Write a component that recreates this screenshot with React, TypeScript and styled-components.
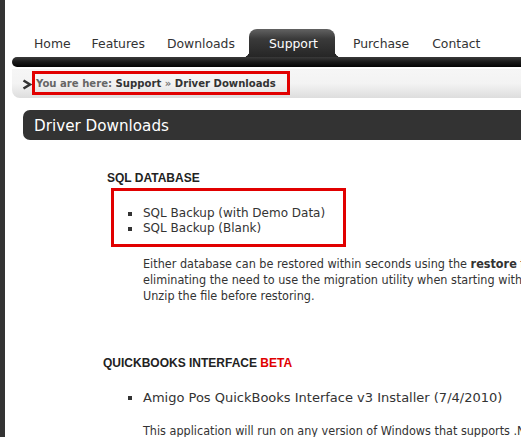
import React from 'react'
import styled, {createGlobalStyle} from 'styled-components'

const GlobalStyle = createGlobalStyle`
    html, body {
        margin: 0;
        padding: 0;
        background: #fff;
        overflow: hidden;
    }
    body {
        font-family: "DejaVu Sans", Verdana, sans-serif;
        color: #333;
    }
`

const Page = styled.div`
    display: flex;
    width: 521px;
    height: 437px;
    overflow: hidden;
`

const SideStrip = styled.div`
    width: 5px;
    flex-shrink: 0;
    background: #333;
`

const Main = styled.div`
    flex: 1;
    min-width: 0;
    padding: 29px 0 0 7px;
    white-space: nowrap;
`

const Nav = styled.ul`
    display: flex;
    height: 28px;
    margin: 0;
    padding: 0 0 0 11px;
    list-style: none;
`

const NavItem = styled.li<{ $active?: boolean }>`
    position: relative;
    display: flex;
    align-items: flex-end;
    padding: ${p => (p.$active ? '0 17px 6px 20px' : '0 11px 6px')};
    margin: ${p => (p.$active ? '0 7px 0 3px' : '0')};
    font-size: 12.4px;
    line-height: 15px;
    color: ${p => (p.$active ? '#fff' : '#333')};
    background: ${p => (p.$active ? 'linear-gradient(#626262, #3a3a3a 35%, #262626)' : 'none')};
    border-radius: ${p => (p.$active ? '8px 8px 0 0' : '0')};

    &:first-child {
        padding-right: 10px;
    }
    &:last-child {
        padding-left: 12px;
    }

    &::before,
    &::after {
        content: '';
        display: ${p => (p.$active ? 'block' : 'none')};
        position: absolute;
        bottom: 0;
        width: 6px;
        height: 6px;
    }
    &::before {
        left: -6px;
        background: radial-gradient(circle at 0 0, transparent 6px, #262626 6.5px);
    }
    &::after {
        right: -6px;
        background: radial-gradient(circle at 100% 0, transparent 6px, #262626 6.5px);
    }
`

const NavBar = styled.div`
    height: 10px;
    border-radius: 5px 0 0 5px;
    background: linear-gradient(#3a3a3a, #1a1a1a 50%, #050505);
`

const Breadcrumb = styled.div`
    display: flex;
    align-items: flex-start;
    height: 29px;
    margin-top: 2px;
    padding: 2px 0 0 10px;
    box-sizing: border-box;
    border-radius: 0 0 0 8px;
    background: linear-gradient(#f6f6f6, #f3f3f3 50%, #dddddd);
    font-size: 10.1px;
    font-weight: bold;
`

const Chevron = styled.svg`
    margin-top: 8px;
    flex-shrink: 0;
`

const Trail = styled.div`
    border: 3px solid #e10000;
    padding: 1px 11px 0 1px;
    line-height: 17px;
    color: #333;
`

const TrailLabel = styled.span`
    color: #666;
`

const TrailSep = styled.span`
    color: #777;
`

const PageTitle = styled.h1`
    height: 30px;
    margin: 12px 0 0 11px;
    padding: 2px 0 0 11px;
    box-sizing: border-box;
    border-radius: 7px 0 0 7px;
    background: #333;
    color: #fff;
    font-size: 15.2px;
    font-weight: normal;
    line-height: 28px;
`

const Content = styled.div`
    padding-left: 91px;
`

const SectionTitle = styled.h2<{ $indent?: number; $gap: number }>`
    margin: ${p => p.$gap}px 0 0 ${p => p.$indent ?? 0}px;
    font-family: "Liberation Sans", Arial, sans-serif;
    font-size: 12px;
    font-weight: bold;
    line-height: 16px;
    color: #222;
`

const Beta = styled.span`
    color: #e00000;
`

const Highlight = styled.div`
    width: 235px;
    box-sizing: border-box;
    margin: 2.5px 0 0 8px;
    padding: 14.5px 0 8.5px 14px;
    border: 3px solid #e10000;
`

const FileList = styled.ul<{ $indent?: number; $gap?: number }>`
    margin: ${p => p.$gap ?? 0}px 0 0 ${p => p.$indent ?? 0}px;
    padding: 0;
    list-style: none;
`

const FileItem = styled.li<{ $size?: number }>`
    display: flex;
    align-items: center;
    font-size: ${p => p.$size ?? 12}px;
    line-height: 15px;
    color: #333;

    &::before {
        content: '';
        width: 4px;
        height: 4px;
        margin: 1px 11px 0 0;
        background: #333;
        flex-shrink: 0;
    }
`

const Note = styled.p<{ $gap: number }>`
    margin: ${p => p.$gap}px 0 0 40px;
    font-family: "DejaVu Sans Condensed", "DejaVu Sans", sans-serif;
    font-stretch: condensed;
    font-size: 12.5px;
    line-height: 16px;
    color: #333;
`

export default function App() {
    const navItems = ['Home', 'Features', 'Downloads', 'Support', 'Purchase', 'Contact']

    return (
        <>
            <GlobalStyle/>
            <Page>
                <SideStrip/>
                <Main>
                    <Nav>
                        {navItems.map(item => (
                            <NavItem key={item} $active={item === 'Support'}>{item}</NavItem>
                        ))}
                    </Nav>
                    <NavBar/>
                    <Breadcrumb>
                        <Chevron width="10" height="11" viewBox="0 0 10 11">
                            <polyline points="1.5,1.5 8,5.5 1.5,9.5" fill="none" stroke="#333" strokeWidth="2.6"/>
                        </Chevron>
                        <Trail>
                            <TrailLabel>You are here:</TrailLabel> Support <TrailSep>»</TrailSep> Driver Downloads
                        </Trail>
                    </Breadcrumb>
                    <PageTitle>Driver Downloads</PageTitle>
                    <Content>
                        <SectionTitle $indent={4} $gap={29.5}>SQL DATABASE</SectionTitle>
                        <Highlight>
                            <FileList>
                                <FileItem>SQL Backup (with Demo Data)</FileItem>
                                <FileItem>SQL Backup (Blank)</FileItem>
                            </FileList>
                        </Highlight>
                        <Note $gap={9}>
                            Either database can be restored within seconds using the <b>restore</b> function in the POS,
                            <br/>
                            eliminating the need to use the migration utility when starting with a new database.
                            <br/>
                            Unzip the file before restoring.
                        </Note>
                        <SectionTitle $gap={50.5}>
                            QUICKBOOKS INTERFACE <Beta>BETA</Beta>
                        </SectionTitle>
                        <FileList $indent={25} $gap={19.5}>
                            <FileItem $size={13}>Amigo Pos QuickBooks Interface v3 Installer (7/4/2010)</FileItem>
                        </FileList>
                        <Note $gap={18}>
                            This application will run on any version of Windows that supports .NET Framework 2.0.
                        </Note>
                    </Content>
                </Main>
            </Page>
        </>
    )
}
